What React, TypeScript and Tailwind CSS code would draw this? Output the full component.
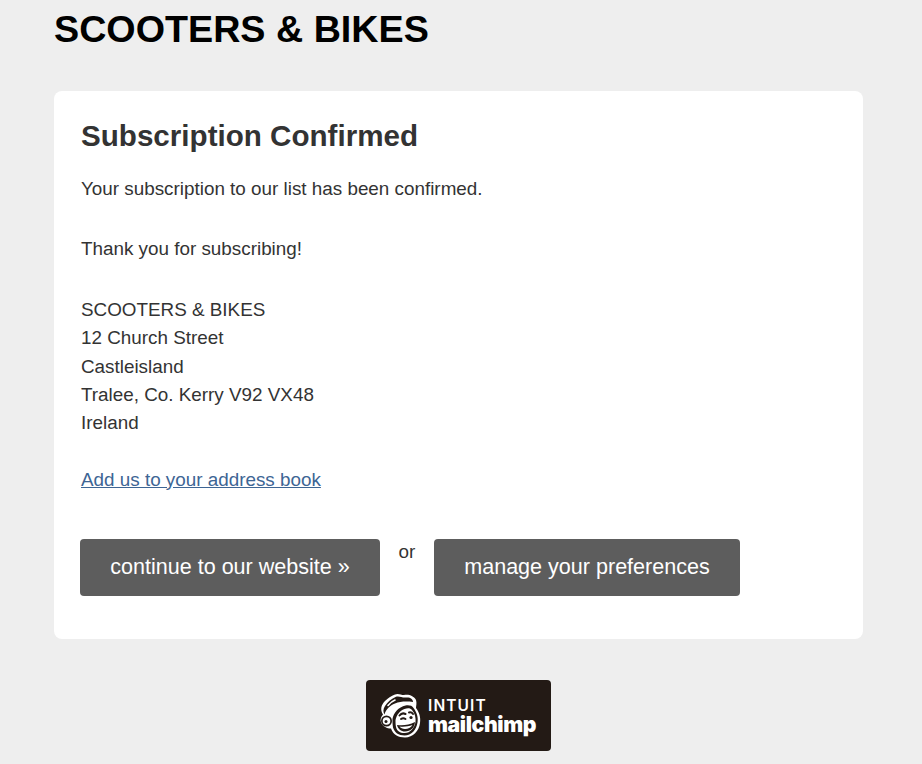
const MonkeyHead = () => (
  <svg width="42" height="46" viewBox="0 0 42 46" fill="none" className="shrink-0">
    {/* head silhouette */}
    <path d="M16 1.500c3-1.500 6 .5 9 .5 5-1 10 1 12 5 1 3 0 6 0 8 3 4 5 9 4 15-1 8-7 14.500-15 14.500-7 0-12-3-14-9-4 0-8-2-10-6-1-3 0-6 2-8C1 17 2 12 6 8c3-3 6-5 10-6.500z" fill="#fff" />
    {/* cap */}
    <path d="M16.500 4C12 6 8.500 9 6 13c-2 3-2 6-.5 8.500C7 16 11 12.500 16 10.500c5-2 11-2.500 18-1.500 0-3-3-5-7-4.500-4 .5-7-2-10.500-.5z" fill="#231a15" />
    <path d="M9 12.500c2-2.500 4.500-4.500 7-5.500" stroke="#fff" strokeWidth="1.600" strokeLinecap="round" />
    {/* ear */}
    <circle cx="7.500" cy="28" r="5.500" fill="#231a15" />
    <circle cx="7.500" cy="28" r="3.800" fill="#fff" />
    <circle cx="7" cy="28.500" r="1.500" fill="#231a15" />
    {/* face */}
    <path d="M13.500 26c1-6 6-12 13-13.500 3.500-.5 6.500 0 8 2.500 3 4 5 9 4 14.500-1 7-6 13-13 13-6 0-10-3-11.500-8-.5-3-.5-5.500-.5-8.500z" fill="#231a15" />
    <path d="M16.500 27c1-5 4-9 9-11 3-1 6-1 7.500 1 3 3.500 4 8 3.500 12-1 6-5 11-11 11-4.500 0-7.500-2-8.500-6-.5-2.500-.5-4.500-.5-7z" fill="#fff" />
    {/* brows and eyes */}
    <path d="M20.500 22.500c1.500-2 4-2.500 6-1.500M30 19.500c1.500-.5 3 0 4 1.500" stroke="#231a15" strokeWidth="2" strokeLinecap="round" />
    <path d="M22 26c1.500-1 3-1 4.500 0" stroke="#231a15" strokeWidth="2" strokeLinecap="round" />
    <circle cx="32" cy="24.500" r="1.600" fill="#231a15" />
    {/* muzzle */}
    <path d="M18 32c5 .5 12 .5 18-3-.5 6-4.500 9.500-10 9.500-4 0-7-2.500-8-6.500z" fill="#231a15" />
    <path d="M20.500 33.500c4 .5 9 0 13-1.500-1.500 2.500-4.500 4-7.500 4-2.500 0-4.500-1-5.500-2.500z" fill="#fff" />
  </svg>
);

export default function App() {
  return (
    <div className="min-h-[764px] bg-[#eeeeee] font-['Liberation_Sans',Arial,sans-serif] overflow-hidden">
      <div className="w-[809px] ml-[54px]">
        <h1 className="text-[37.7px] leading-[58px] font-bold text-black">SCOOTERS &amp; BIKES</h1>
        <div className="mt-[33px] h-[548px] bg-white rounded-lg px-[27px] pt-[27px]">
          <h2 className="text-[29.6px] leading-9 font-bold text-[#333333]">Subscription Confirmed</h2>
          <div className="mt-[21px] text-[18.85px] leading-[28.4px] text-[#333333]">
            <p>Your subscription to our list has been confirmed.</p>
            <p className="mt-8">Thank you for subscribing!</p>
            <p className="mt-8">
              SCOOTERS &amp; BIKES
              <br />
              12 Church Street
              <br />
              Castleisland
              <br />
              Tralee, Co. Kerry V92 VX48
              <br />
              Ireland
            </p>
            <p className="mt-[28px]">
              <a href="#" className="underline text-[#3d6594]">Add us to your address book</a>
            </p>
          </div>
          <div className="mt-[45px] -ml-px flex items-start">
            <a href="#" className="w-[300px] h-[57px] pb-0.5 flex items-center justify-center rounded bg-[#5d5d5d] text-white text-[21.55px]">
              continue to our website »
            </a>
            <span className="w-[54px] text-center text-[18.85px] leading-6 mt-[1px] text-[#333333]">or</span>
            <a href="#" className="w-[306px] h-[57px] pb-0.5 flex items-center justify-center rounded bg-[#5d5d5d] text-white text-[21.55px]">
              manage your preferences
            </a>
          </div>
        </div>
        <a href="#" className="mt-[41px] ml-[312px] w-[185px] h-[71px] rounded-sm bg-[#231a15] flex items-center pl-[13px] gap-[7px] text-white">
          <MonkeyHead />
          <div className="flex flex-col">
            <span className="text-[15.5px] leading-4 font-['Inter',sans-serif] font-semibold tracking-[1.1px]">INTUIT</span>
            <span className="text-[21.2px] leading-5 font-['Inter',sans-serif] font-black tracking-[-0.4px]">mailchimp</span>
          </div>
        </a>
      </div>
    </div>
  );
}
